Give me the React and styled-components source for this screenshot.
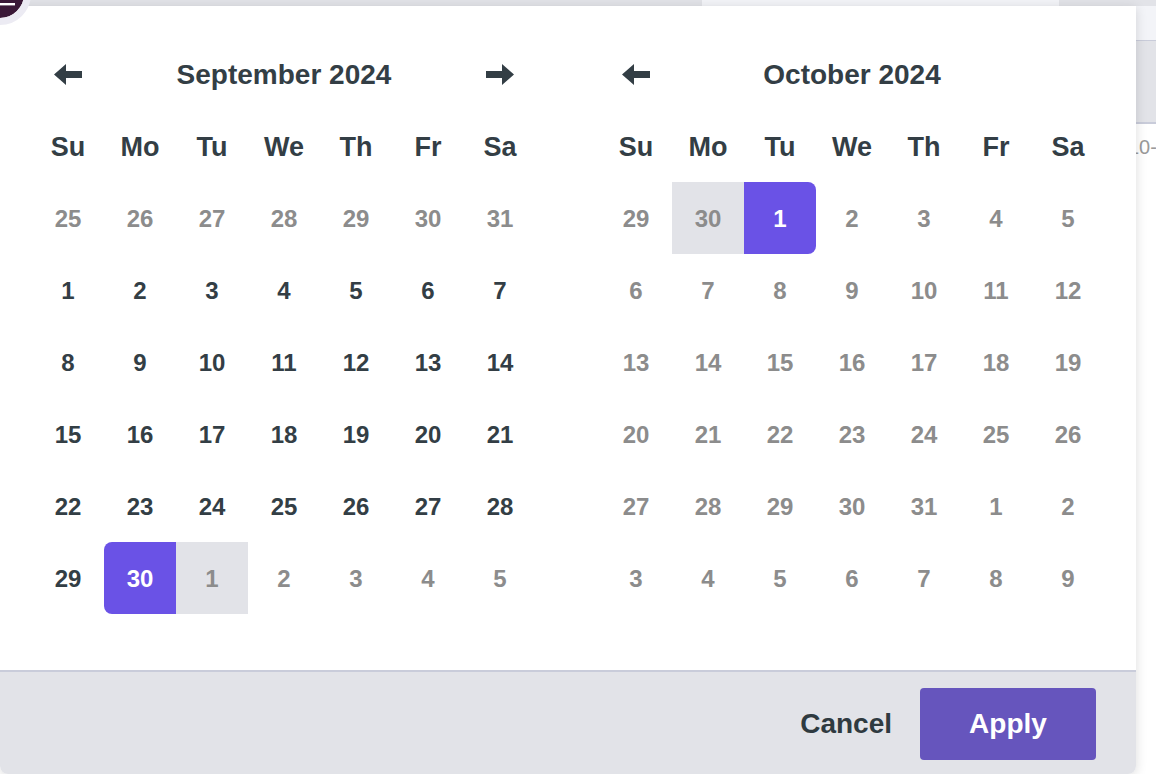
import React from "react";
import styled, { createGlobalStyle } from "styled-components";

const GlobalStyle = createGlobalStyle`
  html, body {
    margin: 0;
    padding: 0;
    background: #ffffff;
  }
  body {
    font-family: "Liberation Sans", Arial, sans-serif;
  }
`;

const RANGE_START = new Date(2024, 8, 30);
const RANGE_END = new Date(2024, 9, 1);
const MAX_DATE = new Date(2024, 9, 1);
const WEEKDAYS = ["Su", "Mo", "Tu", "We", "Th", "Fr", "Sa"];
const MONTH_NAMES = [
  "January", "February", "March", "April", "May", "June",
  "July", "August", "September", "October", "November", "December",
];

const sameDay = (a, b) =>
  a.getFullYear() === b.getFullYear() &&
  a.getMonth() === b.getMonth() &&
  a.getDate() === b.getDate();

// always show at least one day of the previous month on the first row
function buildMonth(year, month) {
  const first = new Date(year, month, 1);
  const offset = first.getDay() || 7;
  const cells = [];
  for (let i = 0; i < 42; i++) {
    const date = new Date(year, month, 1 - offset + i);
    const outside = date.getMonth() !== month;
    let tone = outside || date > MAX_DATE ? "muted" : "day";
    if (date > RANGE_START && date < RANGE_END) tone = "range";
    if (!outside && sameDay(date, RANGE_START)) tone = "start";
    else if (!outside && sameDay(date, RANGE_END)) tone = "end";
    else if (outside && (sameDay(date, RANGE_START) || sameDay(date, RANGE_END))) tone = "range";
    cells.push({ key: date.toISOString(), label: date.getDate(), tone });
  }
  return cells;
}

function Arrow({ dir }) {
  const d =
    dir === "left"
      ? "M0 10.5 L12 0 L12 7 L28 7 L28 14 L12 14 L12 21 Z"
      : "M28 10.5 L16 0 L16 7 L0 7 L0 14 L16 14 L16 21 Z";
  return (
    <svg width="28" height="21" viewBox="0 0 28 21">
      <path d={d} fill="#333e45" />
    </svg>
  );
}

function Month({ year, month, prev, next }) {
  const cells = buildMonth(year, month);
  return (
    <MonthBox>
      <MonthHeader>
        <ArrowSlot>{prev && <Arrow dir="left" />}</ArrowSlot>
        <MonthTitle>
          {MONTH_NAMES[month]} {year}
        </MonthTitle>
        <ArrowSlot>{next && <Arrow dir="right" />}</ArrowSlot>
      </MonthHeader>
      <DayGrid>
        {WEEKDAYS.map((w) => (
          <WeekdayCell key={w}>{w}</WeekdayCell>
        ))}
        {cells.map((c) => (
          <DayCell key={c.key} $tone={c.tone}>
            {c.label}
          </DayCell>
        ))}
      </DayGrid>
    </MonthBox>
  );
}

export default function App() {
  return (
    <Page>
      <GlobalStyle />
      <TopStrip>
        <StripSeg $w="702px" $bg="#e2e3e8" />
        <StripSeg $w="357px" $bg="#f3f4f8" />
        <StripSeg $bg="#e2e3e8" />
      </TopStrip>
      <Toolbar />
      <TableHead />
      <TableRow>
        <span />
        <RowText>10-01</RowText>
      </TableRow>

      <Avatar>
        <svg width="48" height="48" viewBox="-24 -24 48 48">
          <circle r="24" fill="#3a1837" />
          <rect x="-15" y="-5" width="30" height="2.4" fill="#ffffff" />
          <rect x="-15" y="2" width="30" height="2.4" fill="#ffffff" />
          <rect x="-15" y="9" width="30" height="2.4" fill="#ffffff" />
        </svg>
      </Avatar>

      <Popup>
        <Months>
          <Month year={2024} month={8} prev next />
          <Month year={2024} month={9} prev />
        </Months>
        <Footer>
          <CancelButton>Cancel</CancelButton>
          <ApplyButton>Apply</ApplyButton>
        </Footer>
      </Popup>
    </Page>
  );
}

const Page = styled.div`
  position: relative;
  width: 1156px;
  height: 774px;
  overflow: hidden;
  background: #ffffff;
`;

const TopStrip = styled.div`
  display: flex;
  height: 6px;
`;

const StripSeg = styled.div`
  width: ${({ $w }) => $w || "auto"};
  flex: ${({ $w }) => ($w ? "none" : "1")};
  background: ${({ $bg }) => $bg};
`;

const Toolbar = styled.div`
  height: 34px;
  background: #f3f4f8;
  border-bottom: 1px solid #c9ccda;
`;

const TableHead = styled.div`
  height: 81px;
  background: #e2e3e8;
  border-bottom: 2px solid #c9ccda;
`;

const TableRow = styled.div`
  display: grid;
  grid-template-columns: 1128px 1fr;
  align-items: center;
  height: 46px;
  overflow: hidden;
`;

const RowText = styled.span`
  font-size: 20px;
  color: #9a9a9a;
  white-space: nowrap;
`;

const Avatar = styled.div`
  position: absolute;
  left: -31px;
  top: -37px;
  width: 48px;
  height: 48px;
  border: 7px solid #ecebf3;
  border-radius: 50%;
  overflow: hidden;
  z-index: 2;
  svg {
    display: block;
  }
`;

const Popup = styled.div`
  position: absolute;
  top: 6px;
  left: 0;
  width: 1136px;
  height: 768px;
  display: flex;
  flex-direction: column;
  background: #ffffff;
  border-radius: 0 0 8px 8px;
  box-shadow: 0 2px 12px rgba(0, 0, 0, 0.14);
  overflow: hidden;
  z-index: 1;
`;

const Months = styled.div`
  flex: 1;
  display: flex;
  gap: 64px;
  padding: 32px 32px 0;
`;

const MonthBox = styled.div`
  width: 504px;
`;

const MonthHeader = styled.div`
  display: grid;
  grid-template-columns: 72px 1fr 72px;
  align-items: center;
  height: 72px;
`;

const ArrowSlot = styled.div`
  display: flex;
  justify-content: center;
  align-items: center;
  cursor: pointer;
  svg {
    display: block;
  }
`;

const MonthTitle = styled.div`
  text-align: center;
  font-size: 28px;
  font-weight: 700;
  color: #333e45;
  padding-top: 2px;
`;

const DayGrid = styled.div`
  display: grid;
  grid-template-columns: repeat(7, 72px);
  grid-auto-rows: 72px;
`;

const WeekdayCell = styled.div`
  display: flex;
  align-items: center;
  justify-content: center;
  padding-top: 2px;
  font-size: 27px;
  font-weight: 700;
  color: #333e45;
`;

const toneStyles = {
  day: "color: #333e45;",
  muted: "color: #8c8c8c;",
  range: "color: #8c8c8c; background: #e2e3e8;",
  start: "color: #ffffff; background: #6a52e6; border-radius: 8px 0 0 8px;",
  end: "color: #ffffff; background: #6a52e6; border-radius: 0 8px 8px 0;",
};

const DayCell = styled.div`
  display: flex;
  align-items: center;
  justify-content: center;
  padding-top: 2px;
  font-size: 24px;
  font-weight: 700;
  cursor: pointer;
  ${({ $tone }) => toneStyles[$tone]}
`;

const Footer = styled.div`
  display: flex;
  justify-content: flex-end;
  align-items: center;
  gap: 28px;
  padding: 16px 40px 14px;
  background: #e2e3e8;
  border-top: 2px solid #c9ccda;
`;

const CancelButton = styled.button`
  background: none;
  border: none;
  padding: 0;
  font-family: inherit;
  font-size: 28px;
  font-weight: 700;
  color: #2f3a40;
  cursor: pointer;
`;

const ApplyButton = styled.button`
  width: 176px;
  height: 72px;
  border: none;
  border-radius: 4px;
  background: #6655bd;
  color: #ffffff;
  font-family: inherit;
  font-size: 28px;
  font-weight: 700;
  cursor: pointer;
`;
